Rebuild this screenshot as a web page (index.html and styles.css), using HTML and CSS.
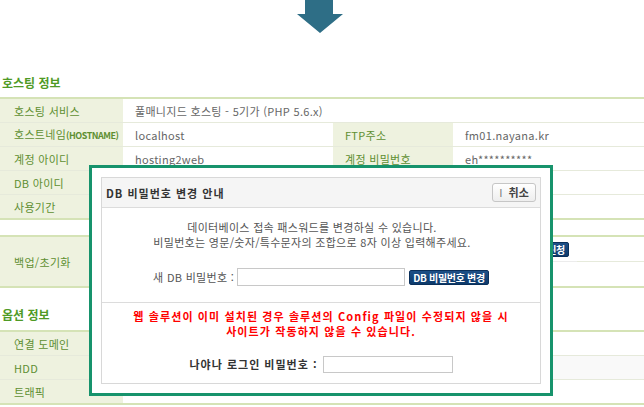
FILE: index.html
```html
<!DOCTYPE html>
<html lang="ko">

<head>
    <meta charset="UTF-8">
    <meta name="viewport" content="width=device-width, initial-scale=1.0">
    <title>호스팅 정보</title>
    <link rel="stylesheet" href="styles.css">
</head>

<body>
    <div class="arrow">
        <svg width="46" height="33" viewBox="0 0 46 33">
            <path d="M8 0h28v14h10L23 33 0 14h8z" fill="#2e6e86" />
        </svg>
    </div>

    <h2 class="sec-title">호스팅 정보</h2>
    <table class="info">
        <colgroup>
            <col class="c-label">
            <col class="c-val">
            <col class="c-label2">
            <col>
        </colgroup>
        <tr>
            <th>호스팅 서비스</th>
            <td colspan="3">풀매니지드 호스팅 - 5기가 (PHP 5.6.x)</td>
        </tr>
        <tr>
            <th>호스트네임<span class="en">(HOSTNAME)</span></th>
            <td>localhost</td>
            <th class="sub">FTP주소</th>
            <td>fm01.nayana.kr</td>
        </tr>
        <tr>
            <th>계정 아이디</th>
            <td>hosting2web</td>
            <th class="sub">계정 비밀번호</th>
            <td>eh**********</td>
        </tr>
        <tr>
            <th>DB 아이디</th>
            <td colspan="3"></td>
        </tr>
        <tr>
            <th>사용기간</th>
            <td colspan="3"></td>
        </tr>
    </table>

    <table class="info gap">
        <colgroup>
            <col class="c-label">
            <col class="c-wide">
            <col>
        </colgroup>
        <tr>
            <th rowspan="2">백업/초기화</th>
            <td class="split">
                <div class="act"><button class="btn-navy">신청</button></div>
            </td>
            <td></td>
        </tr>
        <tr>
            <td class="split"></td>
            <td></td>
        </tr>
    </table>

    <h2 class="sec-title opt">옵션 정보</h2>
    <table class="info">
        <colgroup>
            <col class="c-label">
            <col>
        </colgroup>
        <tr>
            <th>연결 도메인</th>
            <td></td>
        </tr>
        <tr class="shade">
            <th>HDD</th>
            <td></td>
        </tr>
        <tr>
            <th>트래픽</th>
            <td></td>
        </tr>
    </table>

    <!-- DB 비밀번호 변경 레이어 -->
    <div class="modal">
        <div class="modal-panel">
            <div class="modal-head">
                <span class="modal-title">DB 비밀번호 변경 안내</span>
                <button class="btn-close"><span class="bar">I</span> 취소</button>
            </div>
            <div class="modal-body">
                <p class="guide">데이터베이스 접속 패스워드를 변경하실 수 있습니다.<br>비밀번호는 영문/숫자/특수문자의 조합으로 8자 이상 입력해주세요.</p>
                <div class="field">
                    <label for="new-pw">새 DB 비밀번호 :</label>
                    <input type="password" id="new-pw">
                    <button class="btn-navy">DB 비밀번호 변경</button>
                </div>
            </div>
            <div class="modal-body warn-area">
                <p class="warn">웹 솔루션이 이미 설치된 경우 솔루션의 Config 파일이 수정되지 않을 시<br>사이트가 작동하지 않을 수 있습니다.</p>
                <div class="field login">
                    <label for="login-pw">나야나 로그인 비밀번호 :</label>
                    <input type="password" id="login-pw">
                </div>
            </div>
        </div>
    </div>
</body>

</html>
```

FILE: styles.css
```css
body {
    margin: 0;
    font-family: "Noto Sans CJK KR", "Noto Sans", sans-serif;
    font-size: 11px;
    color: #666;
    background: #fff;
    position: relative;
}

.arrow {
    display: flex;
    justify-content: center;
    height: 33px;
    padding-right: 4px;
}

.sec-title {
    margin: 42px 0 6px;
    padding-left: 2px;
    font-size: 12px;
    line-height: 16px;
    font-weight: bold;
    color: #4f9a25;
}

.sec-title.opt {
    margin-top: 19px;
    margin-bottom: 7px;
}

/* info tables */
.info {
    width: 100%;
    border-collapse: collapse;
    table-layout: fixed;
    border-top: 2px solid #d5e3b6;
    border-bottom: 2px solid #d5e3b6;
}

.info.gap {
    margin-top: 15px;
}

.c-label {
    width: 123px;
}

.c-val {
    width: 210px;
}

.c-label2 {
    width: 120px;
}

.c-wide {
    width: 454px;
}

.info th,
.info td {
    height: 23px;
    padding: 0;
    line-height: 14px;
    white-space: nowrap;
    overflow: hidden;
    border-bottom: 1px solid #e6eadb;
}

.info th {
    padding-left: 14px;
    text-align: left;
    font-weight: normal;
    color: #5e8f32;
    background: #eef2df;
    letter-spacing: 0.3px;
}

.info th.sub {
    padding-left: 12px;
}

.info th .en {
    font-size: 9px;
    font-weight: bold;
    letter-spacing: -0.5px;
}

.info td {
    padding-left: 12px;
    color: #666;
    letter-spacing: 0.3px;
}

.info td.split {
    height: 24px;
    padding-right: 8px;
    border-bottom-color: #ececec;
}

.act {
    display: flex;
    align-items: center;
    justify-content: flex-end;
}

.info .shade td {
    background: #f9f9f9;
}

.btn-navy {
    height: 15px;
    padding: 0 3px;
    border: 1px solid #0a2f5a;
    border-radius: 2px;
    background: linear-gradient(#1d4f86, #0d3a6b);
    color: #fff;
    font-family: inherit;
    font-size: 10px;
    font-weight: bold;
    line-height: 13px;
    letter-spacing: -0.3px;
    cursor: pointer;
}

/* layer */
.modal {
    position: absolute;
    left: 89px;
    top: 165px;
    width: 464px;
    height: 231px;
    box-sizing: border-box;
    padding: 9px;
    border: 3px solid #17936c;
    background: #fff;
}

.modal-panel {
    height: 100%;
    box-sizing: border-box;
    border: 1px solid #d8d8d8;
}

.modal-head {
    display: flex;
    align-items: center;
    justify-content: space-between;
    height: 29px;
    padding: 0 4px;
    background: #f5f5f5;
    border-bottom: 1px solid #dcdcdc;
}

.modal-title {
    font-weight: bold;
    color: #333;
    letter-spacing: 1px;
}

.btn-close {
    width: 44px;
    height: 19px;
    padding: 0;
    border: 1px solid #c6c6c6;
    border-radius: 3px;
    background: linear-gradient(#fff, #eee);
    color: #444;
    font-family: inherit;
    font-size: 11px;
    font-weight: bold;
    line-height: 17px;
}

.btn-close .bar {
    font-weight: normal;
    color: #777;
    margin-right: 3px;
}

.modal-body {
    padding: 12px 0 16px;
    border-bottom: 1px solid #dcdcdc;
    text-align: center;
}

.modal-body.warn-area {
    padding-top: 6px;
    border-bottom: none;
}

.guide {
    margin: 0;
    padding-right: 18px;
    line-height: 15px;
    color: #555;
    letter-spacing: 0.3px;
}

.warn {
    margin: 0;
    line-height: 15px;
    font-weight: bold;
    color: #f00;
    letter-spacing: 1.1px;
}

.field {
    display: flex;
    align-items: center;
    justify-content: center;
    margin-top: 18px;
    height: 18px;
}

.field label {
    color: #555;
    margin-right: 3px;
    letter-spacing: 0.3px;
}

.field input {
    width: 168px;
    height: 18px;
    box-sizing: border-box;
    margin: 0 4px 0 0;
    border: 1px solid #c8c8c8;
    padding: 0 3px;
}

.field.login {
    margin-top: 16px;
}

.field.login label {
    font-weight: bold;
    color: #333;
    letter-spacing: 1px;
    margin-right: 5px;
}

.field.login input {
    width: 130px;
    height: 17px;
    margin: 0;
}
```
